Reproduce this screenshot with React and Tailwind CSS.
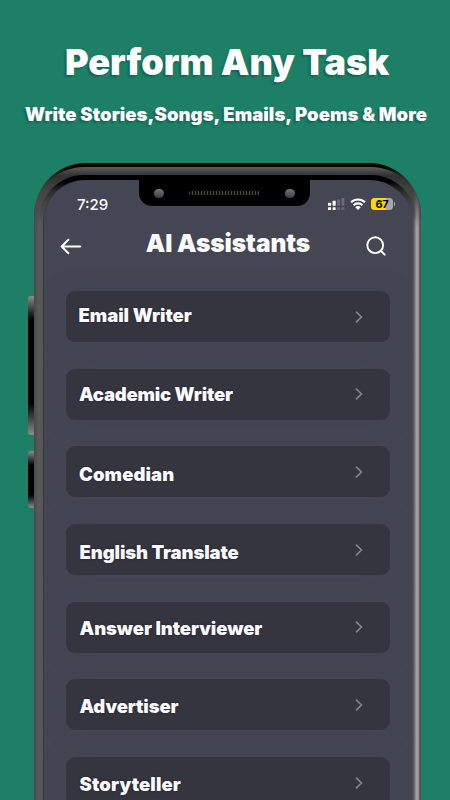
const ASSISTANTS = [
  { name: 'Email Writer', text: 'left-[12.5px] top-[-1px] tracking-[-0.05px]' },
  { name: 'Academic Writer', text: 'left-[13px] top-0 tracking-[-0.18px]' },
  { name: 'Comedian', text: 'left-[13px] top-[2px] tracking-[0.1px]' },
  { name: 'English Translate', text: 'left-[13.5px] top-[3px] tracking-[-0.1px]' },
  { name: 'Answer Interviewer', text: 'left-[13.5px] top-[1px] tracking-[-0.08px]' },
  { name: 'Advertiser', text: 'left-[13.5px] top-[1px] tracking-[-0.12px]' },
  { name: 'Storyteller', text: 'left-[13.5px] top-[2px] tracking-[0.12px]' },
];

function Notch() {
  return (
    <div className="absolute left-[95px] top-0 flex h-[26px] w-[171px] items-center justify-between
                    rounded-b-[13px] bg-black px-[15px]">
      <span className="h-[9px] w-[10px] rounded-full bg-linear-to-b from-[#777] to-[#3c3c3c]" />
      <span className="h-[4px] w-[71px] rounded-full bg-[repeating-linear-gradient(90deg,#4a4a4a_0_1.5px,#0c0c0c_1.5px_3px)]" />
      <span className="h-[9px] w-[10px] rounded-full bg-linear-to-b from-[#777] to-[#3c3c3c]" />
    </div>
  );
}

function SignalIcon() {
  return (
    <svg className="h-[12px] w-[17px]" viewBox="0 0 17 12">
      <g fill="#fff">
        <rect x="0" y="4.8" width="3.1" height="3" rx=".5" />
        <rect x="4.6" y="2.8" width="3.1" height="5" rx=".5" />
        <rect x="0" y="9.2" width="3.1" height="2.8" rx=".5" />
        <rect x="4.6" y="9.2" width="3.1" height="2.8" rx=".5" />
      </g>
      <g fill="#696a75">
        <rect x="9.2" y="1.6" width="2.8" height="6.2" rx=".5" />
        <rect x="13.5" y="0" width="2.8" height="7.8" rx=".5" />
        <rect x="9.2" y="9.2" width="2.8" height="2.8" rx=".5" />
        <rect x="13.5" y="9.2" width="2.8" height="2.8" rx=".5" />
      </g>
    </svg>
  );
}

function WifiIcon() {
  return (
    <svg className="h-[12px] w-[16px]" viewBox="0 0 16 12" fill="none" stroke="#fff" strokeWidth="2.1">
      <path d="M1 4.3a10 10 0 0 1 14 0" />
      <path d="M3.6 7.2a6.3 6.3 0 0 1 8.8 0" />
      <path d="M8 12 5.3 9.3a3.9 3.9 0 0 1 5.4 0z" fill="#fff" stroke="none" />
    </svg>
  );
}

function StatusBar() {
  return (
    <div className="flex h-[48px] items-center justify-between pl-[33px] pr-[17px]">
      <span className="text-[15px] font-medium leading-none text-white">7:29</span>
      <div className="flex items-center">
        <SignalIcon />
        <span className="ml-[5px] flex"><WifiIcon /></span>
        <span className="ml-[5px] flex h-[12px] w-[22px] items-center justify-center rounded-[3.5px]
                         bg-linear-to-r from-[#ffd60a] from-70% to-[#a5a5ad] to-70%
                         text-[11px] font-bold leading-[12px] tracking-[-0.2px] text-black">
          67
        </span>
        <span className="ml-[1px] h-[4px] w-[1px] rounded-r-full bg-[#a5a5ad]" />
      </div>
    </div>
  );
}

function TopBar() {
  return (
    <div className="flex h-[36px] items-center justify-between pl-[16px] pr-[26px]">
      <svg className="h-[18px] w-[22px]" viewBox="0 0 22 18" fill="none" stroke="#fff"
        strokeWidth="2" strokeLinecap="round" strokeLinejoin="round">
        <path d="M20.3 9.5H1.6M8.4 2.7 1.6 9.5l6.8 6.8" />
      </svg>
      <h2 className="relative left-[4px] top-[-3px] text-[24.5px] font-black leading-none tracking-[-0.08px] whitespace-nowrap text-[#fafafa]">
        AI Assistants
      </h2>
      <svg className="h-[20px] w-[20px]" viewBox="0 0 20 20" fill="none" stroke="#fff"
        strokeWidth="1.9" strokeLinecap="round">
        <circle cx="9.2" cy="9.2" r="7.9" />
        <path d="m15 15 3.7 3.7" />
      </svg>
    </div>
  );
}

function AssistantRow({ name, text }) {
  return (
    <li className="flex h-[51px] shrink-0 items-center justify-between rounded-[9px] bg-[#353540] pr-[27px]
                   shadow-[0_0_22px_rgba(66,66,88,0.35)]">
      <span className={`relative text-[18.5px] font-black leading-none whitespace-nowrap text-[#fafafa]
                        [text-shadow:0_0_2px_#191932] ${text}`}>
        {name}
      </span>
      <svg className="h-[12px] w-[8px]" viewBox="0 0 8 12" fill="none" stroke="#85858d"
        strokeWidth="1.7" strokeLinecap="round" strokeLinejoin="round">
        <path d="m1.5 1.2 5 4.8-5 4.8" />
      </svg>
    </li>
  );
}

export default function App() {
  return (
    <div className="flex h-[800px] w-[450px] flex-col overflow-hidden bg-[#1d8066] font-['Inter',sans-serif]">
      <header className="flex h-[163px] shrink-0 flex-col items-center pt-[45px] text-white">
        <h1 className="relative left-[2px] text-[36px] font-black leading-[35px] tracking-[0.05px] whitespace-nowrap
                       [text-shadow:-2px_2px_2px_rgba(0,0,0,0.22)]">
          Perform Any Task
        </h1>
        <p className="relative left-px mt-[25px] text-[18.5px] font-black leading-[18px] tracking-[0.07px] whitespace-nowrap
                      [text-shadow:-2px_2px_2px_rgba(0,0,0,0.22)]">
          Write Stories,Songs, Emails, Poems &amp; More
        </p>
      </header>

      <div className="flex min-h-0 flex-1 pl-[28px]">
        {/* Volume buttons */}
        <div className="flex w-[6px] shrink-0 flex-col gap-[16px] pt-[133px]">
          <span className="h-[139px] rounded-l-[3px] bg-[linear-gradient(#8c8c8c,#000_17%,#000_77%,#8c8c8c)]" />
          <span className="h-[57px] rounded-l-[3px] bg-[linear-gradient(#8c8c8c,#000_25%,#000_77%,#8c8c8c)]" />
        </div>

        {/* Phone body: rim, bevel, inner edge, screen */}
        <div className="flex w-[387px] shrink-0 rounded-t-[52px] bg-[linear-gradient(#000,#000_4px,#2a2a2a_12px,#484848_30px)] pt-[4px]">
          <div className="flex w-full rounded-t-[50px]
                          bg-[linear-gradient(#5c5c5c,#303030_9px,#444_24px,transparent_60px),linear-gradient(90deg,#4a4a4a,#5a5a5a_5px,#545454_9px,#484848_378px,#5c5c5c_380px,#9c9c9c_382px,#a2a2a2_384px,#505050_386px)] pt-[8px]">
            <div className="ml-[5px] mr-[5px] flex w-full rounded-t-[45px] bg-[linear-gradient(#000,#000_6px,#2c2c2c_16px,#444_28px,transparent_46px)] pl-[4px] pr-[4px] pt-[5px]">
              <div className="relative w-full overflow-hidden rounded-t-[42px] border-l border-[#3a3a40] bg-[#454653]">
                <Notch />
                <StatusBar />
                <TopBar />
                <ul className="mt-[27px] flex flex-col gap-[26.7px] px-[22px]">
                  {ASSISTANTS.map((item) => (
                    <AssistantRow key={item.name} {...item} />
                  ))}
                </ul>
              </div>
            </div>
          </div>
        </div>
      </div>
    </div>
  );
}
